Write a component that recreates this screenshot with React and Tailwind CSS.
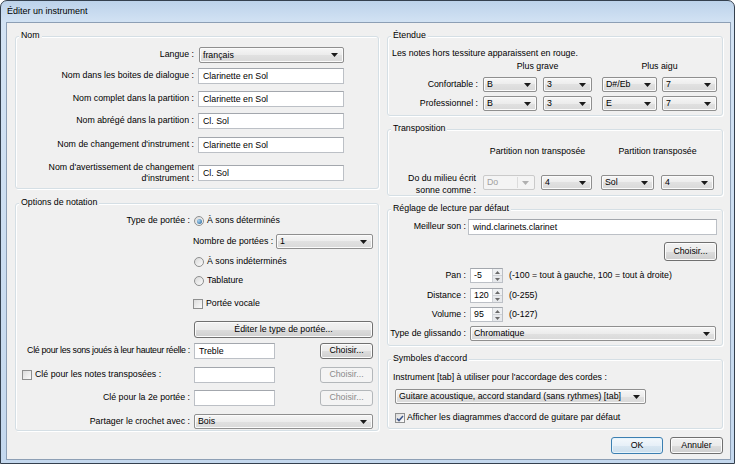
import React from "react";

const Arrow = ({ color = "#1a1a1a" }) => (
  <svg width="7" height="4" viewBox="0 0 7 4" className="shrink-0">
    <path d="M0 0h7L3.5 4z" fill={color} />
  </svg>
);

function TextBox({ value = "", className = "" }) {
  return (
    <div className={`h-[16px] shrink-0 border border-[#bcc0c6] border-t-[#a3a7ad] bg-white pl-[4px] leading-[14px] whitespace-nowrap ${className}`}>
      {value}
    </div>
  );
}

function Combo({ value, className = "", disabled = false }) {
  const look = disabled
    ? "border-[#cacaca] bg-[#f4f4f4] text-[#a0a0a0]"
    : "border-[#8f8f8f] bg-[linear-gradient(to_bottom,#f6f6f6,#ececec_50%,#e1e1e1_50%,#d9d9d9)] shadow-[inset_0_0_0_1px_#fbfbfb]";
  return (
    <div className={`flex h-[15px] shrink-0 items-center justify-between rounded-[2px] border pl-[3px] pr-[5px] leading-[13px] whitespace-nowrap ${look} ${className}`}>
      <span>{value}</span>
      {disabled ? (
        <span className="flex items-center gap-[4px]">
          <span className="h-[11px] w-px bg-[#dcdcdc]" />
          <Arrow color="#b0b0b0" />
        </span>
      ) : (
        <Arrow />
      )}
    </div>
  );
}

function Button({ children, className = "", disabled = false, primary = false }) {
  const look = disabled
    ? "border-[#b3b7ba] bg-[#f4f4f4] text-[#8a8a8a]"
    : primary
    ? "border-[#3c7fb1] bg-[linear-gradient(to_bottom,#f3f8fc,#e7f0f8_50%,#d9e7f2_50%,#ccdeec)] shadow-[inset_0_0_0_1px_#e6f4fc]"
    : "border-[#707070] bg-[linear-gradient(to_bottom,#f2f2f2,#ebebeb_50%,#dddddd_50%,#cfcfcf)] shadow-[inset_0_0_0_1px_#fcfcfc]";
  return (
    <div className={`flex shrink-0 items-center justify-center rounded-[3px] border whitespace-nowrap ${look} ${className}`}>
      {children}
    </div>
  );
}

function Radio({ checked = false }) {
  return (
    <span className="flex h-[10px] w-[10px] shrink-0 items-center justify-center rounded-full border border-[#8e8f8f] bg-[linear-gradient(135deg,#d9d9d9,#fbfbfb)]">
      {checked && <span className="h-[5px] w-[5px] rounded-full bg-[radial-gradient(circle_at_35%_35%,#a9d3f2,#1f5f93)]" />}
    </span>
  );
}

function Check({ checked = false }) {
  return (
    <span className="flex h-[10px] w-[10px] shrink-0 items-center justify-center border border-[#8e8f8f] bg-[linear-gradient(135deg,#dcdcdc,#fbfbfb)]">
      {checked && (
        <svg width="8" height="7" viewBox="0 0 8 7">
          <path d="M1 3.6l2 2L7 1" fill="none" stroke="#3f5688" strokeWidth="1.5" />
        </svg>
      )}
    </span>
  );
}

function Spin({ value }) {
  return (
    <div className="flex h-[15px] w-[33px] shrink-0 border border-[#bcc0c6] border-t-[#a3a7ad] bg-white">
      <span className="flex-1 pl-[3px] leading-[13px]">{value}</span>
      <span className="flex w-[10px] flex-col border-l border-[#cfd2d6]">
        <span className="flex flex-1 items-center justify-center border-b border-[#cfd2d6] bg-[#eef0f2]">
          <svg width="5" height="3" viewBox="0 0 5 3"><path d="M0 3h5L2.5 0z" fill="#6a6a6a" /></svg>
        </span>
        <span className="flex flex-1 items-center justify-center bg-[#e7e9ec]">
          <svg width="5" height="3" viewBox="0 0 5 3"><path d="M0 0h5L2.5 3z" fill="#6a6a6a" /></svg>
        </span>
      </span>
    </div>
  );
}

function Group({ title, className = "", children }) {
  return (
    <div className={`relative shrink-0 rounded-[3px] border border-[#d5dfe5] shadow-[inset_1px_1px_0_#ffffff,1px_1px_0_#ffffff] ${className}`}>
      <span className="absolute left-[3px] top-[-8px] bg-[#f0f0f0] px-[2px] leading-[12px]">{title}</span>
      {children}
    </div>
  );
}

function Row({ label, labelW, className = "", children }) {
  return (
    <div className={`flex items-center ${className}`}>
      <div className={`flex shrink-0 justify-end text-right whitespace-nowrap ${labelW}`}>{label}</div>
      {children}
    </div>
  );
}

export default function App() {
  return (
    <div className="h-[467px] w-[737px] bg-white font-['Liberation_Sans',Arial,sans-serif] text-[8.8px] text-black">
      <div className="flex h-[464px] w-[735px] flex-col rounded-t-[7px] border border-[#34404e] bg-[linear-gradient(to_bottom,#bcd2ea,#d3e3f4_22px,#c4d8ee)] pb-[3px] pl-[5px] pr-[3px]">
        <div className="flex h-[21px] items-center pl-[1px] text-[9px]">Éditer un instrument</div>

        <div className="flex flex-1 flex-col border border-[#8d9fb5] bg-[#f0f0f0] pl-[8px] pt-[13px]">
          <div className="flex items-start gap-[8px]">
            {/* left column */}
            <div className="flex w-[364px] flex-col gap-[14px]">
              <Group title="Nom" className="h-[153px] pt-[10px]">
                <Row label="Langue :" labelW="w-[178px]" className="h-[16px]">
                  <Combo value="français" className="ml-[5px] h-[16px] w-[145px]" />
                </Row>
                <Row label="Nom dans les boites de dialogue :" labelW="w-[178px]" className="mt-[5px] h-[16px]">
                  <TextBox value="Clarinette en Sol" className="ml-[4px] w-[146px]" />
                </Row>
                <Row label="Nom complet dans la partition :" labelW="w-[178px]" className="mt-[7px] h-[16px]">
                  <TextBox value="Clarinette en Sol" className="ml-[4px] w-[146px]" />
                </Row>
                <Row label="Nom abrégé dans la partition :" labelW="w-[178px]" className="mt-[6px] h-[16px]">
                  <TextBox value="Cl. Sol" className="ml-[4px] w-[146px]" />
                </Row>
                <Row label="Nom de changement d'instrument :" labelW="w-[178px]" className="mt-[8px] h-[16px]">
                  <TextBox value="Clarinette en Sol" className="ml-[4px] w-[146px]" />
                </Row>
                <Row
                  label={<span className="leading-[11px]">Nom d'avertissement de changement<br />d'instrument :</span>}
                  labelW="w-[178px]"
                  className="mt-[8px] h-[24px]"
                >
                  <TextBox value="Cl. Sol" className="ml-[4px] w-[146px]" />
                </Row>
              </Group>

              <Group title="Options de notation" className="h-[228px] pt-[10px]">
                <Row label="Type de portée :" labelW="w-[174px]" className="h-[14px]">
                  <span className="ml-[4px]"><Radio checked /></span>
                  <span className="ml-[3px]">À sons déterminés</span>
                </Row>
                <div className="mt-[6px] flex h-[15px] items-center pl-[177px] pr-[5px]">
                  <span className="whitespace-nowrap">Nombre de portées :</span>
                  <Combo value="1" className="ml-auto w-[97px]" />
                </div>
                <div className="mt-[6px] flex h-[14px] items-center pl-[178px]">
                  <Radio />
                  <span className="ml-[3px]">À sons indéterminés</span>
                </div>
                <div className="mt-[5px] flex h-[14px] items-center pl-[178px]">
                  <Radio />
                  <span className="ml-[3px]">Tablature</span>
                </div>
                <div className="mt-[9px] flex h-[14px] items-center pl-[177px]">
                  <Check />
                  <span className="ml-[3px]">Portée vocale</span>
                </div>
                <div className="mt-[10px] flex pl-[178px]">
                  <Button className="h-[17px] w-[179px]">Éditer le type de portée...</Button>
                </div>
                <Row
                  label={<span className="tracking-[-0.3px]">Clé pour les sons joués à leur hauteur réelle :</span>}
                  labelW="w-[174px]"
                  className="mt-[5px] h-[16px] pr-[5px]"
                >
                  <TextBox value="Treble" className="ml-[4px] w-[81px]" />
                  <Button className="ml-auto h-[16px] w-[53px]">Choisir...</Button>
                </Row>
                <div className="mt-[8px] flex h-[16px] items-center pr-[5px]">
                  <div className="flex w-[174px] shrink-0 items-center pl-[6px]">
                    <Check />
                    <span className="ml-[3px] whitespace-nowrap">Clé pour les notes transposées :</span>
                  </div>
                  <TextBox className="ml-[4px] w-[81px]" />
                  <Button disabled className="ml-auto h-[16px] w-[53px]">Choisir...</Button>
                </div>
                <Row label="Clé pour la 2e portée :" labelW="w-[174px]" className="mt-[7px] h-[16px] pr-[5px]">
                  <TextBox className="ml-[4px] w-[81px]" />
                  <Button disabled className="ml-auto h-[16px] w-[53px]">Choisir...</Button>
                </Row>
                <Row label="Partager le crochet avec :" labelW="w-[174px]" className="mt-[8px] h-[15px]">
                  <Combo value="Bois" className="ml-[4px] w-[179px]" />
                </Row>
              </Group>
            </div>

            {/* right column */}
            <div className="flex w-[336px] flex-col gap-[13px]">
              <Group title="Étendue" className="h-[80px] pt-[10px]">
                <div className="h-[12px] pl-[4px] leading-[12px]">Les notes hors tessiture apparaissent en rouge.</div>
                <div className="mt-[2px] flex h-[12px] items-center">
                  <span className="ml-[95px] w-[109px] text-center">Plus grave</span>
                  <span className="ml-[10px] w-[115px] text-center">Plus aigu</span>
                </div>
                <Row label="Confortable :" labelW="w-[90px]" className="mt-[4px] h-[15px]">
                  <Combo value="B" className="ml-[5px] w-[54px]" />
                  <Combo value="3" className="ml-[6px] w-[49px]" />
                  <Combo value="D#/Eb" className="ml-[10px] w-[55px]" />
                  <Combo value="7" className="ml-[5px] w-[55px]" />
                </Row>
                <Row label="Professionnel :" labelW="w-[90px]" className="mt-[4px] h-[15px]">
                  <Combo value="B" className="ml-[5px] w-[54px]" />
                  <Combo value="3" className="ml-[6px] w-[49px]" />
                  <Combo value="E" className="ml-[10px] w-[55px]" />
                  <Combo value="7" className="ml-[5px] w-[55px]" />
                </Row>
              </Group>

              <Group title="Transposition" className="h-[67px] pt-[16px]">
                <div className="flex h-[12px] items-center">
                  <span className="ml-[95px] w-[109px] text-center whitespace-nowrap">Partition non transposée</span>
                  <span className="ml-[9px] w-[113px] text-center whitespace-nowrap">Partition transposée</span>
                </div>
                <div className="mt-[14px] flex items-start">
                  <div className="w-[88px] shrink-0 text-right leading-[12px] whitespace-nowrap">
                    Do du milieu écrit<br />sonne comme :
                  </div>
                  <Combo disabled value="Do" className="ml-[7px] mt-[3px] w-[52px]" />
                  <Combo value="4" className="ml-[6px] mt-[3px] w-[51px]" />
                  <Combo value="Sol" className="ml-[9px] mt-[3px] w-[53px]" />
                  <Combo value="4" className="ml-[7px] mt-[3px] w-[53px]" />
                </div>
              </Group>

              <Group title="Réglage de lecture par défaut" className="h-[137px] pt-[9px]">
                <Row label="Meilleur son :" labelW="w-[78px]" className="h-[16px]">
                  <TextBox value="wind.clarinets.clarinet" className="ml-[2px] w-[249px]" />
                </Row>
                <div className="mt-[7px] flex justify-end pr-[5px]">
                  <Button className="h-[19px] w-[53px]">Choisir...</Button>
                </div>
                <Row label="Pan :" labelW="w-[78px]" className="mt-[7px] h-[15px]">
                  <span className="ml-[4px]"><Spin value="-5" /></span>
                  <span className="ml-[6px] whitespace-nowrap">(-100 = tout à gauche, 100 = tout à droite)</span>
                </Row>
                <Row label="Distance :" labelW="w-[78px]" className="mt-[5px] h-[15px]">
                  <span className="ml-[4px]"><Spin value="120" /></span>
                  <span className="ml-[6px]">(0-255)</span>
                </Row>
                <Row label="Volume :" labelW="w-[78px]" className="mt-[4px] h-[15px]">
                  <span className="ml-[4px]"><Spin value="95" /></span>
                  <span className="ml-[6px]">(0-127)</span>
                </Row>
                <Row label="Type de glissando :" labelW="w-[78px]" className="mt-[4px] h-[15px]">
                  <Combo value="Chromatique" className="ml-[4px] w-[246px]" />
                </Row>
              </Group>

              <Group title="Symboles d'accord" className="h-[70px] pt-[11px]">
                <div className="h-[12px] pl-[5px] leading-[12px]">Instrument [tab] à utiliser pour l'accordage des cordes :</div>
                <Combo value="Guitare acoustique, accord standard (sans rythmes) [tab]" className="ml-[7px] mt-[6px] w-[251px]" />
                <div className="mt-[8px] flex h-[12px] items-center pl-[7px]">
                  <Check checked />
                  <span className="ml-[2px]">Afficher les diagrammes d'accord de guitare par défaut</span>
                </div>
              </Group>
            </div>
          </div>

          <div className="mt-[6px] flex justify-end gap-[7px] pr-[7px]">
            <Button primary className="h-[17px] w-[52px]">OK</Button>
            <Button className="h-[17px] w-[53px]">Annuler</Button>
          </div>
        </div>
      </div>
    </div>
  );
}
